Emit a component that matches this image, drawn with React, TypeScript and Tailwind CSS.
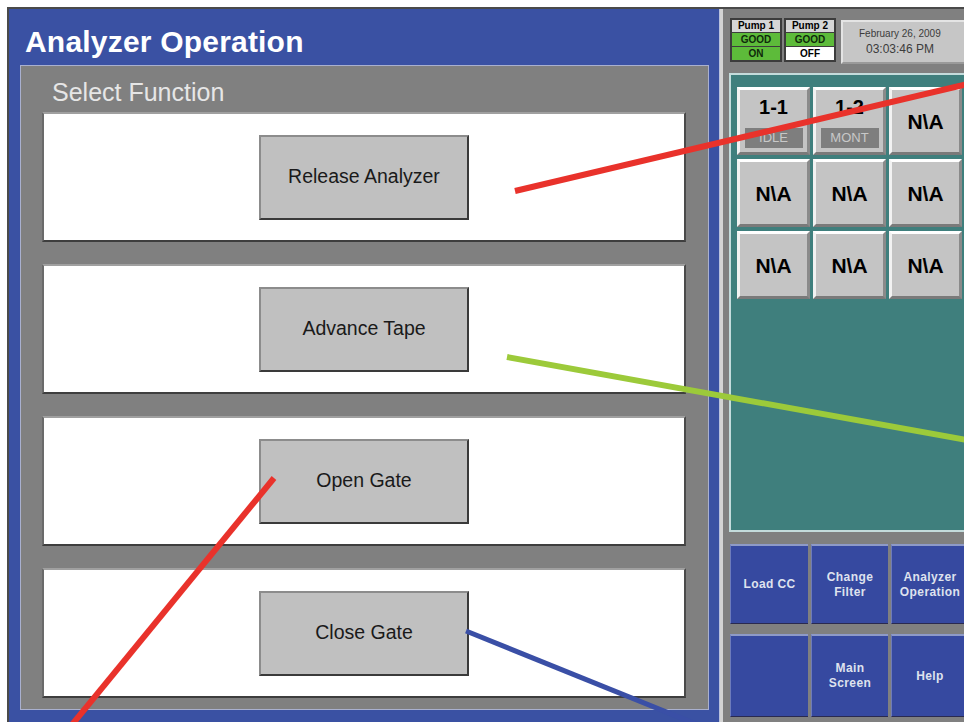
const cells = [
  { label: '1-1', badge: 'IDLE' },
  { label: '1-2', badge: 'MONT' },
  { label: 'N\\A' },
  { label: 'N\\A' },
  { label: 'N\\A' },
  { label: 'N\\A' },
  { label: 'N\\A' },
  { label: 'N\\A' },
  { label: 'N\\A' },
];

const functions = ['Release Analyzer', 'Advance Tape', 'Open Gate', 'Close Gate'];

const navRows = [
  [['Load CC'], ['Change', 'Filter'], ['Analyzer', 'Operation']],
  [[], ['Main', 'Screen'], ['Help']],
];

function PumpBox({ name, second, secondOn }: { name: string; second: string; secondOn: boolean }) {
  return (
    <div className="w-[52px] border-2 border-[#3c3c3c] bg-[#3c3c3c] flex flex-col gap-px text-[10px] font-bold leading-none">
      <div className="h-[12px] bg-[#d6d6d6] flex items-center justify-center text-black">{name}</div>
      <div className="h-[13px] bg-[#5dbb3a] flex items-center justify-center text-[#0e2a0a]">GOOD</div>
      <div
        className={
          secondOn
            ? 'h-[13px] bg-[#5dbb3a] flex items-center justify-center text-[#0e2a0a]'
            : 'h-[13px] bg-white flex items-center justify-center text-black'
        }
      >
        {second}
      </div>
    </div>
  );
}

export default function App() {
  return (
    <div
      className="relative w-[964px] h-[722px] overflow-hidden bg-white"
      style={{ fontFamily: '"Liberation Sans", Arial, sans-serif' }}
    >
      <div className="absolute left-[7px] top-[7px] right-0 bottom-0 flex border-t-2 border-l-2 border-[#4a4a4a]">
        {/* Left: Analyzer Operation */}
        <div className="w-[711px] h-full bg-[#3a51a3] border-r border-[#b8c0dc] flex flex-col">
          <div className="h-[56px] flex items-center pl-[16px] pt-[10px]">
            <h1 className="text-white font-bold text-[30px] leading-none tracking-[0.2px]">Analyzer Operation</h1>
          </div>
          <div className="ml-[11px] w-[689px] h-[645px] bg-[#808080] border border-[#a9b0cf] flex flex-col pl-[21px] pr-[22px] pt-[11px]">
            <div className="h-[35px] pl-[10px] text-[25px] leading-[30px] text-[#e6e6e6]">Select Function</div>
            <div className="flex flex-col gap-[22px]">
              {functions.map((f) => (
                <div
                  key={f}
                  className="h-[130px] bg-white border-2 border-t-[#a0a0a0] border-l-[#6a6a6a] border-b-[#3e3e3e] border-r-[#4a4a4a] flex items-center justify-center"
                >
                  <button className="w-[210px] h-[85px] bg-[#c0c0c0] border-2 border-t-[#8c8c8c] border-l-[#8c8c8c] border-b-[#3a3a3a] border-r-[#3a3a3a] text-[19.5px] text-[#1a1a1a]">
                    {f}
                  </button>
                </div>
              ))}
            </div>
          </div>
        </div>

        {/* Right: status & navigation */}
        <div className="flex-1 h-full overflow-hidden bg-[#808080] border-l-[3px] border-[#d4d4d4]">
          <div className="w-[260px] pl-[7px] pt-[9px] flex flex-col">
            <div className="h-[48px] flex items-start gap-[2px]">
              <PumpBox name="Pump 1" second="ON" secondOn />
              <PumpBox name="Pump 2" second="OFF" secondOn={false} />
              <div className="ml-[3px] mt-[2px] w-[130px] h-[44px] bg-[#c6c6c6] border-2 border-t-[#e4e4e4] border-l-[#e4e4e4] border-b-[#9a9a9a] border-r-[#9a9a9a] flex flex-col items-start pl-[16px] justify-center text-[#3c3c3c]">
                <div className="text-[10px] leading-[14px]">February 26, 2009</div>
                <div className="text-[12px] leading-[16px] pl-[7px]">03:03:46 PM</div>
              </div>
            </div>

            <div className="mt-[7px] -ml-[1px] h-[459px] bg-[#3f7f7d] border-2 border-[#c4dcdc] pl-[6px] pt-[12px]">
              <div className="grid grid-cols-[73px_73px_73px] gap-x-[3px] gap-y-[4px]">
                {cells.map((c, i) => (
                  <div
                    key={i}
                    className="h-[68px] bg-[#c4c4c4] border-[3px] border-t-white border-l-[#f2f2f2] border-b-[#7a7a7a] border-r-[#8a8a8a] flex flex-col items-center justify-center font-bold text-black"
                  >
                    {c.badge ? (
                      <>
                        <div className="text-[20px] leading-[24px]">{c.label}</div>
                        <div className="mt-[9px] w-[58px] h-[20px] bg-[#7e7e7e] text-[#c8c8c8] font-normal text-[13px] leading-[20px] text-center">
                          {c.badge}
                        </div>
                      </>
                    ) : (
                      <div className="text-[21px] leading-none">{c.label}</div>
                    )}
                  </div>
                ))}
              </div>
            </div>

            <div className="mt-[12px] flex flex-col gap-[10px]">
              {navRows.map((row, r) => (
                <div key={r} className="flex gap-[3px]">
                  {row.map((lines, i) => (
                    <div
                      key={i}
                      className={
                        (i === 0 ? 'w-[78px]' : 'w-[77px]') +
                        ' ' +
                        (r === 0 ? 'h-[80px]' : 'h-[83px]') +
                        ' bg-[#3649a0] border-t-2 border-l border-t-[#8e9ac8] border-l-[#6d7bbb] border-b border-b-[#2a2a50] flex flex-col items-center justify-center text-[#dfe2ee] font-bold text-[12px] leading-[15px] tracking-[0.4px]'
                      }
                      style={{ fontFamily: '"Liberation Sans Narrow", "Liberation Sans", Arial, sans-serif' }}
                    >
                      {lines.map((l) => (
                        <span key={l}>{l}</span>
                      ))}
                    </div>
                  ))}
                </div>
              ))}
            </div>
          </div>
        </div>
      </div>

      {/* Annotation lines */}
      <svg className="absolute inset-0 pointer-events-none" width="964" height="722" viewBox="0 0 964 722">
        <line x1="515" y1="191" x2="972" y2="83" stroke="#e9322b" strokeWidth="6" />
        <line x1="507" y1="357" x2="972" y2="441" stroke="#9cca3a" strokeWidth="6" />
        <line x1="274" y1="478" x2="66" y2="732" stroke="#e9322b" strokeWidth="6" />
        <line x1="466" y1="631" x2="706" y2="728" stroke="#3a4fa6" strokeWidth="5" />
      </svg>
    </div>
  );
}
